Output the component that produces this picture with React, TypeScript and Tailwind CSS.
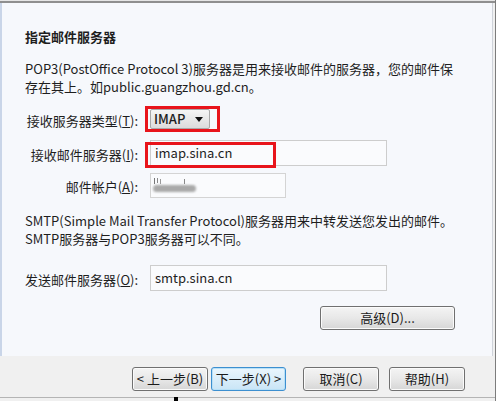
import React from 'react';

function Btn({ children, className = '', focus = false }: { children: React.ReactNode; className?: string; focus?: boolean }) {
  return (
    <div
      className={`flex h-[24px] items-center justify-center rounded-[3px] border text-[13px] text-[#1a1a1a] ${
        focus
          ? 'border-[#3c8fd0] bg-linear-to-b from-[#eaf6fd] to-[#c9e5f6] shadow-[inset_0_0_0_1px_#b8e0f7]'
          : 'border-[#707070] bg-linear-to-b from-[#f4f4f4] via-[#e8e8e8] to-[#d6d6d6] shadow-[inset_0_0_0_1px_#fbfbfb]'
      } ${className}`}
    >
      {children}
    </div>
  );
}

export default function App() {
  return (
    <div className="flex h-[401px] w-[500px] bg-white font-['Noto_Sans_CJK_SC',sans-serif] text-[13px] leading-[18px] text-[#1e1e1e]">
      <div className="flex w-[495px] flex-col bg-[#f0f0f0]">
        {/* top edge */}
        <div className="h-[1px] bg-[#e6e6e6]" />
        <div className="h-[2px] bg-[#8f8f8f]" />

        {/* wizard page */}
        <div className="mr-[2px] h-[353px] border-l-2 border-r border-l-[#c9d5e8] border-r-[#cfd3da] bg-[#f6f8fc] pl-[23px]">
          <div className="mt-[25px] font-bold">指定邮件服务器</div>
          <div className="mt-[14px]">
            POP3(PostOffice Protocol 3)服务器是用来接收邮件的服务器，您的邮件保
            <br />
            存在其上。如public.guangzhou.gd.cn。
          </div>

          {/* incoming type */}
          <div className="relative mt-[10px] flex h-[26px] items-center">
            <div className="w-[113px] pt-[4px] text-right">
              接收服务器类型(<span className="underline">T</span>):
            </div>
            <div className="ml-[12px] flex h-[20px] w-[60px] items-center justify-between rounded-[2px] border border-[#a9a9a9] bg-linear-to-b from-[#f5f5f5] to-[#dcdcdc] pl-[3px] pr-[6px]">
              <span className="text-[13px] font-medium">IMAP</span>
              <svg width="8" height="5" viewBox="0 0 8 5">
                <path d="M0 0h8L4 5z" fill="#111" />
              </svg>
            </div>
            <div className="absolute left-[120px] top-0 h-[26px] w-[75px] border-[3px] border-[#e8141b]" />
          </div>

          {/* incoming server */}
          <div className="relative mt-[8px] flex h-[26px] items-center">
            <div className="w-[113px] pt-[4px] text-right">
              接收邮件服务器(<span className="underline">I</span>):
            </div>
            <div className="ml-[12px] flex h-[26px] w-[237px] items-center border border-[#cdcdcd] bg-[#fafbfd] pl-[4px] text-[13px]">
              imap.sina.cn
            </div>
            <div className="absolute left-[120px] top-[2px] h-[26px] w-[131px] border-[3px] border-[#e8141b]" />
          </div>

          {/* account */}
          <div className="mt-[7px] flex h-[25px] items-center">
            <div className="w-[113px] pt-[3px] text-right">
              邮件帐户(<span className="underline">A</span>):
            </div>
            <div className="relative ml-[12px] h-[25px] w-[136px] border border-[#d4d4d4] bg-[#fafbfd]">
              <div className="absolute left-[3px] top-[4px] h-[6px] w-[1px] bg-[#777]" />
              <div className="absolute left-[6px] top-[4px] h-[5px] w-[1px] bg-[#888]" />
              <div className="absolute left-[9px] top-[5px] h-[5px] w-[1px] bg-[#999]" />
              <div className="absolute left-[33px] top-[5px] h-[5px] w-[1px] bg-[#888]" />
              <div className="absolute left-[2px] top-[11px] h-[7px] w-[43px] rounded-full bg-[#a9a9a9] blur-[1px]" />
            </div>
          </div>

          <div className="mt-[14px]">
            SMTP(Simple Mail Transfer Protocol)服务器用来中转发送您发出的邮件。
            <br />
            SMTP服务器与POP3服务器可以不同。
          </div>

          {/* outgoing server */}
          <div className="mt-[17px] flex h-[26px] items-center">
            <div className="w-[125px] pt-[4px]">
              发送邮件服务器(<span className="underline">O</span>):
            </div>
            <div className="flex h-[26px] w-[237px] items-center border border-[#cdcdcd] bg-[#fafbfd] pl-[4px]">
              smtp.sina.cn
            </div>
          </div>

          <div className="mt-[15px] flex pl-[295px]">
            <Btn className="w-[135px]">高级(D)...</Btn>
          </div>
        </div>

        {/* button bar */}
        <div className="relative flex h-[42px] justify-end border-b border-[#b4b4b4] pr-[30px] pt-[11px]">
          <Btn className="w-[76px]">&lt; 上一步(B)</Btn>
          <Btn focus className="ml-[3px] w-[75px]">下一步(X) &gt;</Btn>
          <Btn className="ml-[17px] w-[76px]">取消(C)</Btn>
          <Btn className="ml-[10px] w-[76px]">帮助(H)</Btn>
          <div className="absolute bottom-[-4px] left-[174px] h-[4px] w-[4px] bg-black" />
        </div>
      </div>
      <div className="w-[1px] bg-[#7c7c7c]" />
      <div className="w-[4px] bg-white" />
    </div>
  );
}
